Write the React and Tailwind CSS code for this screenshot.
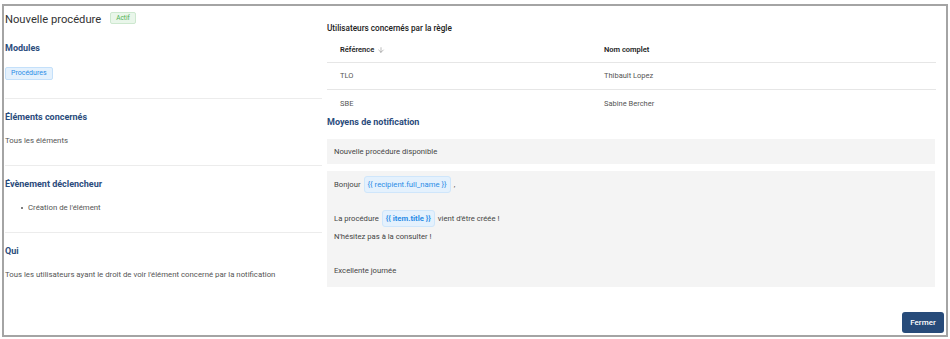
import { ArrowDown } from "lucide-react";

const sans = { fontFamily: "Roboto, 'Liberation Sans', Arial, sans-serif" };

export default function App() {
  return (
    <div className="h-[339px] w-[950px] bg-white pl-[2px] pt-[4px]" style={sans}>
      <div className="flex h-[333px] w-[946px] flex-col border-2 border-[#a4a4a4] bg-white">
        <div className="flex flex-1">
          <LeftColumn />
          <RightColumn />
        </div>
        <div className="flex justify-end pb-[2px] pr-[2px]">
          <button className="h-[21px] w-[42px] rounded-[3px] bg-[#274b7a] text-[8px] font-medium text-white">Fermer</button>
        </div>
      </div>
    </div>
  );
}

function LeftColumn() {
  return (
    <div className="w-[318px] pl-[1px]">
      <div className="flex h-[28px] items-center gap-[9px]">
        <span className="text-[11.2px] text-[#333]">Nouvelle procédure</span>
        <span className="-mt-[4px] rounded-[2px] border border-[#cde8cf] bg-[#e9f6ea] px-[5px] text-[6.5px] leading-[10px] text-[#4caf50]">Actif</span>
      </div>

      <Section first title="Modules">
        <span className="inline-block rounded-[2px] border border-[#c4e0fa] bg-[#e4f1fd] px-[5px] text-[7px] leading-[11px] text-[#2a8ce6]">Procédures</span>
      </Section>
      <Section title="Éléments concernés">
        <p className="text-[7.8px] leading-[12px] text-[#555]">Tous les éléments</p>
      </Section>
      <Section title="Évènement déclencheur">
        <ul className="pl-[16px] text-[7.8px] leading-[12px] text-[#555]">
          <li className="flex items-center gap-[5px]">
            <span className="h-[2px] w-[2px] rounded-full bg-[#555]" />
            Création de l'élément
          </li>
        </ul>
      </Section>
      <Section title="Qui" last>
        <p className="text-[7.8px] leading-[12px] text-[#555]">Tous les utilisateurs ayant le droit de voir l'élément concerné par la notification</p>
      </Section>
    </div>
  );
}

function Section({ title, children, first, last }) {
  return (
    <div className={(first ? "pt-[7px] pb-[18px]" : "pt-[11px] pb-[18px]") + (last ? "" : " border-b border-[#ececec]")}>
      <h3 className="text-[9px] font-bold leading-[14px] text-[#2b4c7c]">{title}</h3>
      <div className={first ? "mt-[12px] flex" : "mt-[11px]"}>{children}</div>
    </div>
  );
}

function RightColumn() {
  const users = [
    { ref: "TLO", name: "Thibault Lopez" },
    { ref: "SBE", name: "Sabine Bercher" },
  ];
  return (
    <div className="ml-[5px] w-[609px]">
      <p className="pt-[16px] text-[8.2px] font-medium leading-[12px] text-[#222]">Utilisateurs concernés par la règle</p>
      <div className="mt-[3px] text-[7.5px]">
        <div className="flex h-[26px] items-center border-b border-[#e6e6e6] font-semibold text-[#222]">
          <div className="flex w-[264px] items-center gap-[3px] pl-[13px]">
            Référence <ArrowDown className="h-[8px] w-[8px] text-[#777]" strokeWidth={1.5} />
          </div>
          <div className="pl-[13px]">Nom complet</div>
        </div>
        {users.map((u, i) => (
          <div key={u.ref} className={"flex h-[27px] items-center text-[#555]" + (i === 0 ? " border-b border-[#e6e6e6]" : "")}>
            <div className="w-[264px] pl-[13px]">{u.ref}</div>
            <div className="pl-[13px]">{u.name}</div>
          </div>
        ))}
      </div>
      <h3 className="-mt-[2px] text-[9px] font-bold leading-[14px] text-[#2b4c7c]">Moyens de notification</h3>
      <div className="mt-[10px] w-[608px] text-[7.7px] text-[#444]">
        <div className="flex h-[25px] items-center bg-[#f4f4f4] pl-[7px]">Nouvelle procédure disponible</div>
        <div className="mt-[7px] h-[116px] bg-[#f4f4f4] px-[7px] pt-[5px] leading-[17px]">
          <div className="flex items-center">
            Bonjour <Chip>{"{{ recipient.full_name }}"}</Chip> ,
          </div>
          <div className="h-[17px]" />
          <div className="flex items-center">
            La procédure <Chip bold>{"{{ item.title }}"}</Chip> vient d'être créée !
          </div>
          <div className="mt-[1px]">N'hésitez pas à la consulter !</div>
          <div className="h-[17px]" />
          <div>Excellente journée</div>
        </div>
      </div>
    </div>
  );
}

function Chip({ children, bold }) {
  return (
    <span className={"mx-[3px] rounded-[3px] border border-[#cfe6fb] bg-[#e4f1fd] px-[3px] leading-[15px] text-[#2a8ce6]" + (bold ? " font-bold" : "")}>
      {children}
    </span>
  );
}
